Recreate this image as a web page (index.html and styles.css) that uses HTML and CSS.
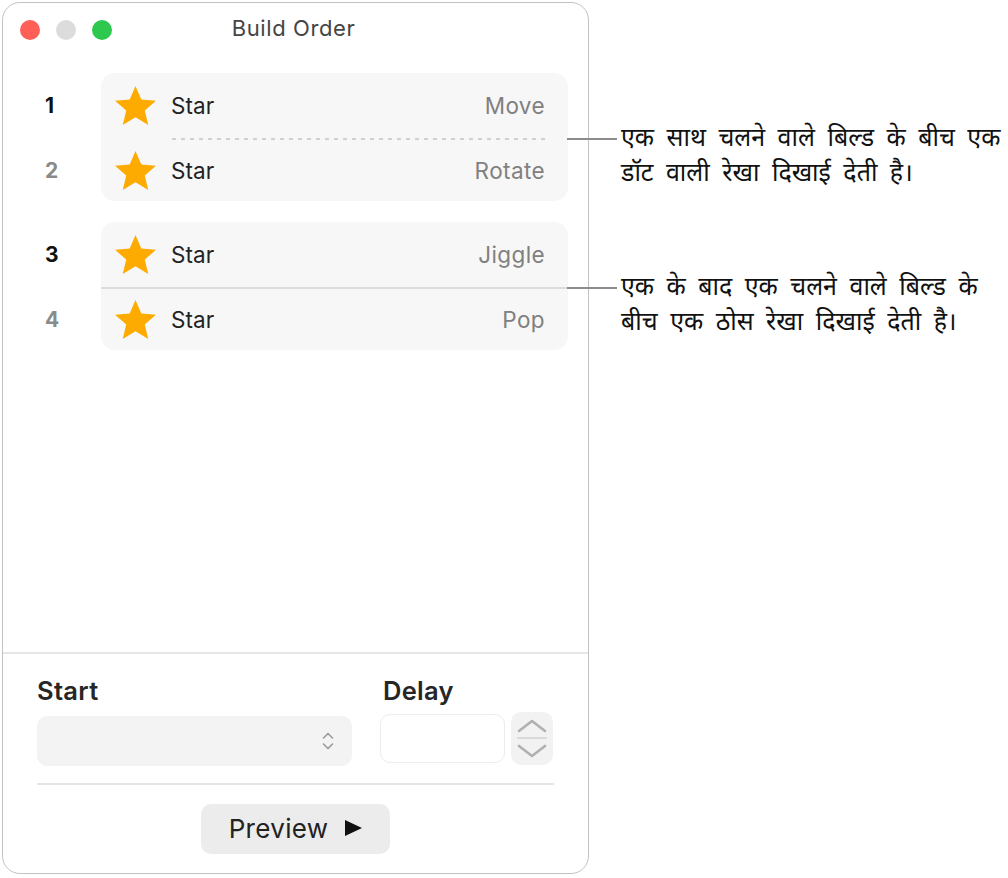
FILE: index.html
```html
<!DOCTYPE html>
<html lang="hi">
<head>
<meta charset="utf-8">
<title>Build Order</title>
<link rel="stylesheet" href="styles.css">
</head>
<body>
<div class="page">
  <div class="window">
    <div class="titlebar">
      <div class="lights">
        <span class="light red"></span>
        <span class="light gray"></span>
        <span class="light green"></span>
      </div>
      <div class="title">Build Order</div>
      <div></div>
    </div>

    <div class="list">
      <div class="group">
        <div class="nums">
          <div class="num first current">1</div>
          <div class="num second">2</div>
        </div>
        <div class="card">
          <div class="row first">
            <svg class="star" viewBox="1.4 1.3 21.2 20.2"><polygon points="12,1.3 15,8.3 22.6,9 16.8,14 18.6,21.5 12,17.5 5.4,21.5 7.2,14 1.4,9 9,8.3"/></svg>
            <span class="name">Star</span>
            <span class="effect">Move</span>
          </div>
          <div class="sep dotted"></div>
          <div class="row second">
            <svg class="star" viewBox="1.4 1.3 21.2 20.2"><polygon points="12,1.3 15,8.3 22.6,9 16.8,14 18.6,21.5 12,17.5 5.4,21.5 7.2,14 1.4,9 9,8.3"/></svg>
            <span class="name">Star</span>
            <span class="effect">Rotate</span>
          </div>
        </div>
      </div>

      <div class="group">
        <div class="nums">
          <div class="num first current">3</div>
          <div class="num second">4</div>
        </div>
        <div class="card">
          <div class="row first">
            <svg class="star" viewBox="1.4 1.3 21.2 20.2"><polygon points="12,1.3 15,8.3 22.6,9 16.8,14 18.6,21.5 12,17.5 5.4,21.5 7.2,14 1.4,9 9,8.3"/></svg>
            <span class="name">Star</span>
            <span class="effect">Jiggle</span>
          </div>
          <div class="sep solid"></div>
          <div class="row second">
            <svg class="star" viewBox="1.4 1.3 21.2 20.2"><polygon points="12,1.3 15,8.3 22.6,9 16.8,14 18.6,21.5 12,17.5 5.4,21.5 7.2,14 1.4,9 9,8.3"/></svg>
            <span class="name">Star</span>
            <span class="effect">Pop</span>
          </div>
        </div>
      </div>
    </div>

    <div class="bottom">
      <div class="controls">
        <div class="start-col">
          <div class="label">Start</div>
          <div class="popup">
            <svg class="updown" viewBox="0 0 14 22"><polyline points="2.5,8 7,3.5 11.5,8"/><polyline points="2.5,14 7,18.5 11.5,14"/></svg>
          </div>
        </div>
        <div class="delay-col">
          <div class="label">Delay</div>
          <div class="delay-inputs">
            <div class="field"></div>
            <div class="stepper">
              <svg class="step-up" viewBox="0 0 30 14"><polyline points="2,12 15,2 28,12"/></svg>
              <span class="step-line"></span>
              <svg class="step-down" viewBox="0 0 30 14"><polyline points="2,2 15,12 28,2"/></svg>
            </div>
          </div>
        </div>
      </div>
      <div class="hr"></div>
      <div class="actions">
        <button class="preview">Preview <svg class="play" viewBox="0 0 17 16"><polygon points="0,0 17,8 0,16"/></svg></button>
      </div>
    </div>
  </div>

  <div class="callout c1">
    <span class="leader"></span>
    <p>एक साथ चलने वाले बिल्ड के बीच एक<br>डॉट वाली रेखा दिखाई देती है।</p>
  </div>
  <div class="callout c2">
    <span class="leader"></span>
    <p>एक के बाद एक चलने वाले बिल्ड के<br>बीच एक ठोस रेखा दिखाई देती है।</p>
  </div>
</div>
</body>
</html>
```

FILE: styles.css
```css
* { box-sizing: border-box; }

html, body {
  margin: 0;
  padding: 0;
  background: #ffffff;
}

body {
  font-family: Inter, "Noto Sans", "Liberation Sans", sans-serif;
  color: #222222;
}

.page {
  position: relative;
  width: 1008px;
  height: 878px;
  padding: 2px 0 0 2px;
}

.window {
  width: 587px;
  height: 872px;
  border: 1px solid #c2c2c2;
  border-radius: 18px;
  background: #ffffff;
  display: flex;
  flex-direction: column;
  overflow: hidden;
}

/* title bar */
.titlebar {
  height: 52px;
  flex: none;
  display: grid;
  grid-template-columns: 1fr auto 1fr;
  align-items: center;
  padding-left: 17px;
}

.lights {
  display: flex;
  gap: 16px;
  padding-top: 1px;
}

.light {
  width: 20px;
  height: 20px;
  border-radius: 50%;
  display: block;
}
.light.red { background: #fe5f57; }
.light.gray { background: #dcdcdc; }
.light.green { background: #2fc84e; }

.title {
  font-size: 22px;
  color: #454545;
  letter-spacing: 0.6px;
  padding-bottom: 2px;
  margin-left: -21px;
}

/* list */
.list {
  flex: 1;
  padding: 18px 20px 0 0;
  display: flex;
  flex-direction: column;
  gap: 21px;
}

.group {
  display: flex;
}

.nums {
  width: 98px;
  flex: none;
  display: flex;
  flex-direction: column;
  padding-left: 42px;
}

.num {
  font-size: 21px;
  font-weight: 700;
  color: #8a8a8a;
  display: flex;
  align-items: center;
}
.num.first { height: 65px; margin-bottom: 2px; }
.num.second { height: 61px; }
.num.current { color: #111111; }

.card {
  flex: 1;
  background: #f7f7f7;
  border-radius: 14px;
  display: flex;
  flex-direction: column;
}

.row {
  display: flex;
  align-items: center;
  padding: 0 23px 0 14px;
}
.row.first { height: 65px; }
.row.second { height: 61px; }

.star {
  width: 41px;
  height: 39px;
  flex: none;
  fill: #fdab00;
}

.name {
  font-size: 22.5px;
  color: #232323;
  margin-left: 15px;
  letter-spacing: 0.1px;
}

.effect {
  margin-left: auto;
  font-size: 22.5px;
  color: #808080;
  letter-spacing: 0.4px;
}

.sep {
  height: 2px;
  flex: none;
}
.sep.dotted {
  margin: 0 22px 0 71px;
  background: repeating-linear-gradient(to right, #d0d0d0 0 4px, transparent 4px 9px);
}
.sep.solid {
  background: #dcdcdc;
}

/* bottom panel */
.bottom {
  flex: none;
  height: 221px;
  border-top: 2px solid #e6e6e6;
  padding: 22px 34px 0 34px;
  display: flex;
  flex-direction: column;
}

.controls {
  display: flex;
  gap: 28px;
}

.start-col {
  width: 315px;
}

.delay-col {
  flex: 1;
}

.label {
  font-size: 25.5px;
  font-weight: 600;
  color: #262626;
  height: 30px;
  line-height: 30px;
  margin-bottom: 6px;
  letter-spacing: 0.3px;
}
.delay-col .label { padding-left: 3px; }

.popup {
  margin-top: 10px;
  height: 50px;
  border-radius: 10px;
  background: #f3f3f3;
  display: flex;
  align-items: center;
  justify-content: flex-end;
  padding-right: 17px;
}

.updown {
  width: 14px;
  height: 22px;
  fill: none;
  stroke: #9b9b9b;
  stroke-width: 1.6;
  stroke-linecap: round;
  stroke-linejoin: round;
}

.delay-inputs {
  display: flex;
  gap: 6px;
  align-items: flex-start;
}

.field {
  margin-top: 2px;
  width: 125px;
  height: 49px;
  border: 1.5px solid #ececec;
  border-radius: 10px;
  background: #ffffff;
}

.stepper {
  width: 42px;
  height: 53px;
  border-radius: 10px;
  background: #f2f2f2;
  display: flex;
  flex-direction: column;
  align-items: center;
  padding-top: 7px;
}

.step-up, .step-down {
  width: 30px;
  height: 14px;
  fill: none;
  stroke: #b0b0b0;
  stroke-width: 2.6;
  stroke-linecap: round;
  stroke-linejoin: round;
}

.step-line {
  display: block;
  width: 30px;
  height: 2px;
  background: #dadada;
  margin: 4px 0 5px;
}

.hr {
  height: 2px;
  background: #e5e5e5;
  margin-top: 17px;
}

.actions {
  display: flex;
  justify-content: center;
  padding-top: 19px;
}

.preview {
  width: 189px;
  height: 50px;
  border: none;
  border-radius: 10px;
  background: #ececec;
  font-family: Inter, "Noto Sans", "Liberation Sans", sans-serif;
  font-size: 26px;
  color: #222222;
  display: flex;
  align-items: center;
  justify-content: center;
  padding: 0 0 2px 0;
  letter-spacing: 0.3px;
}

.play {
  width: 17px;
  height: 16px;
  fill: #111111;
  margin-left: 17px;
}

/* callouts (annotation overlay) */
.callout {
  position: absolute;
  left: 567px;
  display: flex;
  align-items: flex-start;
}
.callout.c1 { top: 123px; }
.callout.c2 { top: 272px; }

.leader {
  display: block;
  width: 50px;
  height: 2px;
  background: #8c8c8c;
  margin-top: 15px;
  margin-right: 4px;
}

.callout p {
  margin: 0;
  font-family: "Noto Sans Devanagari", "Noto Sans", "Lohit Devanagari", sans-serif;
  font-size: 25px;
  line-height: 35px;
  word-spacing: 6px;
  color: #111111;
  white-space: nowrap;
}
```
